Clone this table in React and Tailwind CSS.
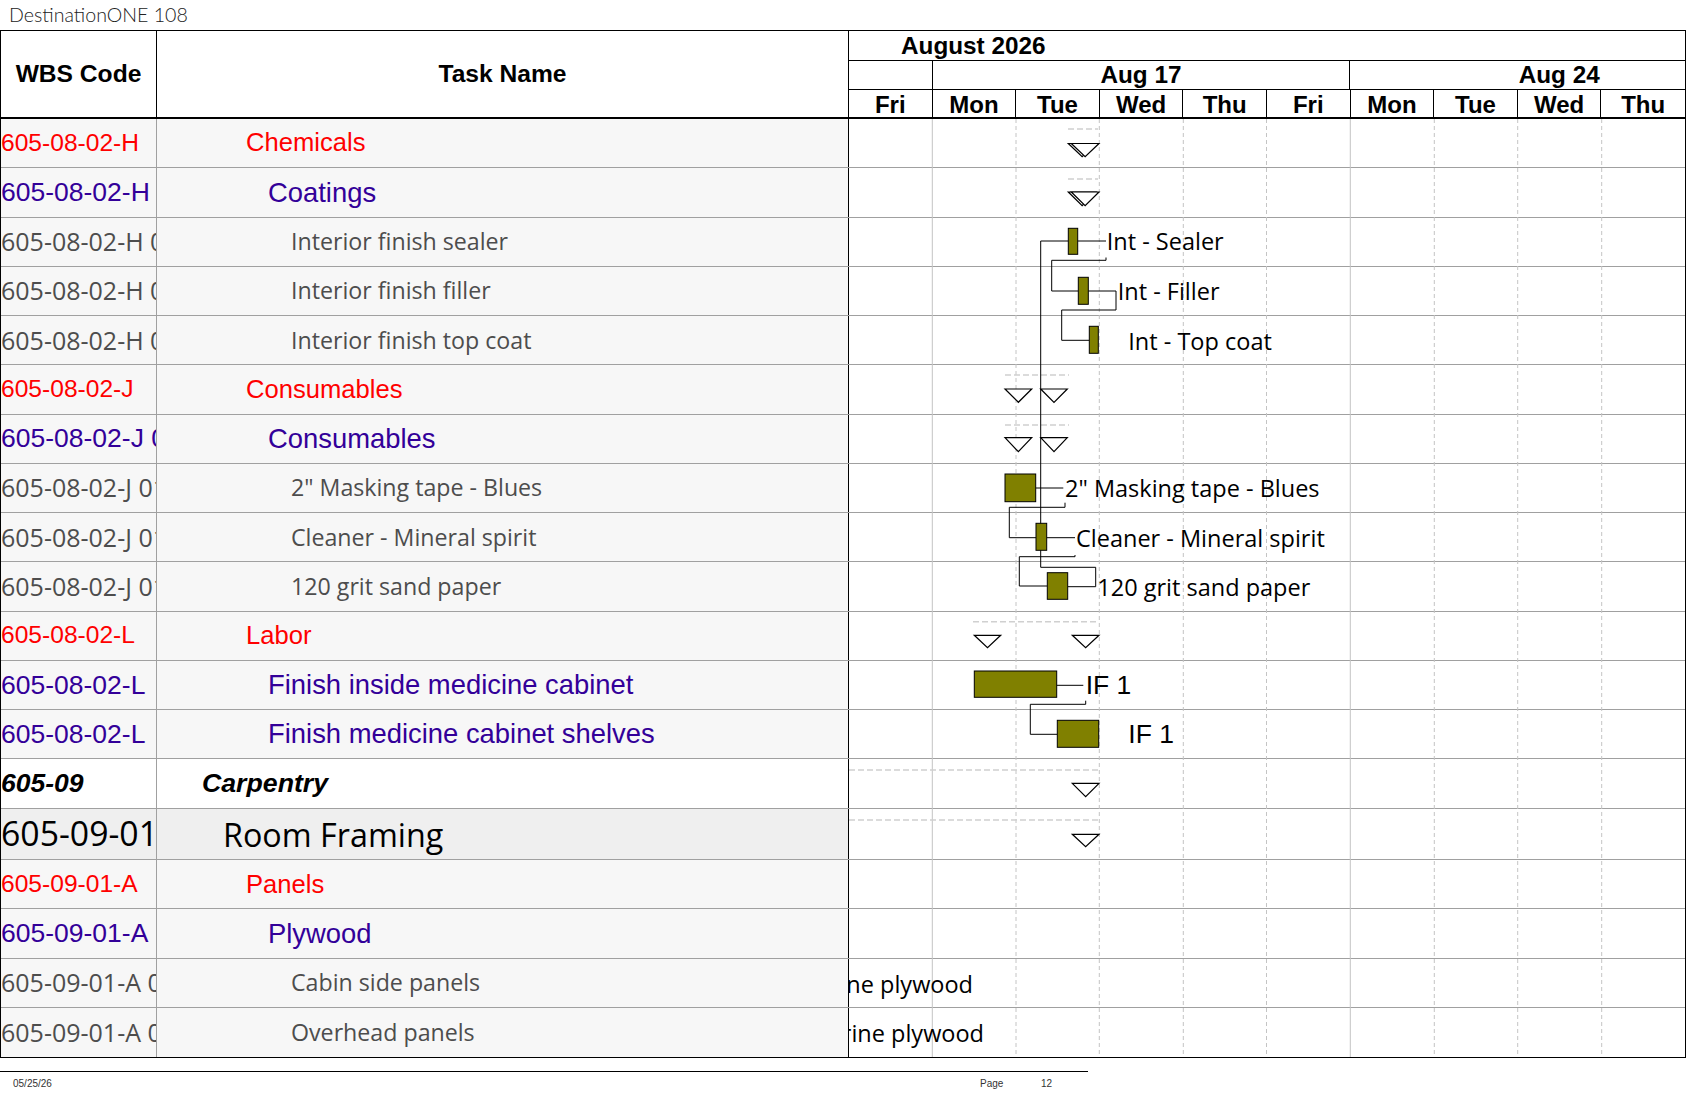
const ARIAL = "font-['Liberation_Sans',Arial,sans-serif]";
const OPEN = "font-['Open_Sans','Noto_Sans',sans-serif]";

const rows = [
  { code: '605-08-02-H', name: 'Chemicals', t: 'red' },
  { code: '605-08-02-H', name: 'Coatings', t: 'purple' },
  { code: '605-08-02-H 01', name: 'Interior finish sealer', t: 'gray' },
  { code: '605-08-02-H 02', name: 'Interior finish filler', t: 'gray' },
  { code: '605-08-02-H 03', name: 'Interior finish top coat', t: 'gray' },
  { code: '605-08-02-J', name: 'Consumables', t: 'red' },
  { code: '605-08-02-J 01', name: 'Consumables', t: 'purple' },
  { code: '605-08-02-J 01 01', name: '2" Masking tape - Blues', t: 'gray' },
  { code: '605-08-02-J 01 02', name: 'Cleaner - Mineral spirit', t: 'gray' },
  { code: '605-08-02-J 01 03', name: '120 grit sand paper', t: 'gray' },
  { code: '605-08-02-L', name: 'Labor', t: 'red' },
  { code: '605-08-02-L', name: 'Finish inside medicine cabinet', t: 'purple' },
  { code: '605-08-02-L', name: 'Finish medicine cabinet shelves', t: 'purple' },
  { code: '605-09', name: 'Carpentry', t: 'carp' },
  { code: '605-09-01', name: 'Room Framing', t: 'room' },
  { code: '605-09-01-A', name: 'Panels', t: 'red' },
  { code: '605-09-01-A', name: 'Plywood', t: 'purple' },
  { code: '605-09-01-A 01', name: 'Cabin side panels', t: 'gray' },
  { code: '605-09-01-A 02', name: 'Overhead panels', t: 'gray' },
];

const styles = {
  red: {
    h: 'h-[49.25px]', bg: 'bg-[#f7f7f7]',
    code: `${ARIAL} text-[24.6px] leading-none text-[#ff0000]`,
    name: `${ARIAL} text-[25.6px] leading-none text-[#ff0000] pl-[89px]`,
  },
  purple: {
    h: 'h-[49.25px]', bg: 'bg-[#f7f7f7]',
    code: `${ARIAL} text-[26.5px] leading-none text-[#330099]`,
    name: `${ARIAL} text-[27.4px] leading-none text-[#330099] pl-[111px]`,
  },
  gray: {
    h: 'h-[49.25px]', bg: 'bg-[#f7f7f7]',
    code: `${OPEN} text-[25px] leading-none text-[#4d4d4d]`,
    name: `${OPEN} text-[23.2px] leading-none text-[#4d4d4d] pl-[134px]`,
  },
  carp: {
    h: 'h-[49.25px]', bg: 'bg-white',
    code: `${ARIAL} text-[26.5px] leading-none font-bold italic text-black`,
    name: `${ARIAL} text-[26.7px] leading-none font-bold italic text-black pl-[45px]`,
  },
  room: {
    h: 'h-[51.7px]', bg: 'bg-[#efefef]',
    code: `${OPEN} text-[33.8px] leading-none text-black`,
    name: `${OPEN} text-[32.3px] leading-none text-black pl-[66px]`,
  },
};

const days = ['Fri', 'Mon', 'Tue', 'Wed', 'Thu', 'Fri', 'Mon', 'Tue', 'Wed', 'Thu'];

const solidLines = [932.3, 1350.3];
const dashedLines = [1016, 1099.3, 1183.3, 1266.5, 1434.3, 1517.7, 1601.7];

const bars = [
  [1068.3, 228.3, 9.4, 26],
  [1078.3, 277.3, 10, 27],
  [1089.3, 326.3, 9, 27],
  [1005, 474, 30.7, 27.7],
  [1036, 523.3, 10.7, 27],
  [1047.3, 572.7, 20.4, 26.6],
  [974.3, 671, 82.4, 26.3],
  [1057.3, 720.3, 41.4, 27],
];

const paths = [
  'M1040.7 241 H1068.3',
  'M1077.7 241 H1106',
  'M1040.7 241 V567.3 H1095.7 V586.7 H1067.7',
  'M1106 257.5 V260.3 H1051.7 V291 H1078.3',
  'M1088.3 291 H1116 V310 H1061.7 V340.3 H1089.3',
  'M1035.7 488 H1063.3',
  'M1065 502.7 V507.3 H1009.3 V537.7 H1036',
  'M1046.7 537.7 H1075',
  'M1075 555 V556.7 H1019.3 V586 H1047.3',
  'M1056.7 685.3 H1083.3',
  'M1085.7 700.7 V704.3 H1030.3 V734.3 H1057.3',
];

const dashes = [
  [1068, 1098, 129],
  [1068, 1098, 179],
  [1005, 1069, 375],
  [1005, 1069, 425],
  [973, 1099, 621.7],
  [849, 1099, 770],
  [849, 1099, 820],
];

function tri(x1, x2, y1, y2) {
  const mid = (x1 + x2) / 2;
  return `${x1},${y1} ${x2},${y1} ${mid},${y2}`;
}

const triangles = [
  [1068.3, 1096, 143.5, 156.7],
  [1071.3, 1099, 143.5, 156.7],
  [1068.3, 1096, 192, 205.7],
  [1071.3, 1099, 192, 205.7],
  [1005, 1031.7, 389, 402.3],
  [1040.7, 1067.3, 389, 402.3],
  [1005, 1031.7, 437.7, 451.7],
  [1040.7, 1067.3, 437.7, 451.7],
  [974.3, 1000.7, 635.3, 647.7],
  [1072.3, 1099, 635.3, 647.7],
  [1072.3, 1099, 783.3, 796.7],
  [1072.3, 1099, 834.3, 846.7],
];

const labels = [
  [1106.7, 241, 'Int - Sealer'],
  [1117.7, 291, 'Int - Filler'],
  [1128.3, 340.5, 'Int - Top coat'],
  [1065, 488, '2" Masking tape - Blues'],
  [1076, 537.7, 'Cleaner - Mineral spirit'],
  [1097.3, 587, '120 grit sand paper'],
];

function Chart() {
  return (
    <svg
      className="absolute left-[848px] top-0 h-full w-[836px] overflow-hidden"
      xmlns="http://www.w3.org/2000/svg"
    >
      <g transform="translate(-849 -119)">
        {solidLines.map((x) => (
          <line key={x} x1={x} x2={x} y1={119} y2={1060} stroke="#c4c4c4" strokeWidth="1" />
        ))}
        {dashedLines.map((x) => (
          <line key={x} x1={x} x2={x} y1={119} y2={1060} stroke="#c4c4c4" strokeWidth="1" strokeDasharray="4 3" />
        ))}
        {dashes.map(([a, b, y], i) => (
          <line key={i} x1={a} x2={b} y1={y} y2={y} stroke="#d0d0d0" strokeWidth="1.6" strokeDasharray="6 3" />
        ))}
        {triangles.map(([a, b, y1, y2], i) => (
          <polygon key={i} points={tri(a, b, y1, y2)} fill="white" stroke="black" strokeWidth="1.2" />
        ))}
        {paths.map((d, i) => (
          <path key={i} d={d} fill="none" stroke="black" strokeWidth="1" />
        ))}
        {bars.map(([x, y, w, h], i) => (
          <rect key={i} x={x} y={y} width={w} height={h} fill="#808000" stroke="black" strokeWidth="1" />
        ))}
        {labels.map(([x, y, t], i) => (
          <text key={i} x={x} y={y} dominantBaseline="central" fontFamily="'Open Sans', 'Noto Sans', sans-serif" fontSize="23.5" fill="black">
            {t}
          </text>
        ))}
        <text x={1085.7} y={685.3} dominantBaseline="central" fontFamily="'Liberation Sans', Arial, sans-serif" fontSize="26.5" fill="black">IF 1</text>
        <text x={1128.3} y={734.3} dominantBaseline="central" fontFamily="'Liberation Sans', Arial, sans-serif" fontSize="26.5" fill="black">IF 1</text>
        <text x={973} y={983.5} textAnchor="end" dominantBaseline="central" fontFamily="'Open Sans', 'Noto Sans', sans-serif" fontSize="23.5" fill="black">Marine plywood</text>
        <text x={984} y={1033} textAnchor="end" dominantBaseline="central" fontFamily="'Open Sans', 'Noto Sans', sans-serif" fontSize="23.5" fill="black">Marine plywood</text>
      </g>
    </svg>
  );
}

export default function App() {
  return (
    <div className={`w-[1687px] h-[1097px] bg-white text-black ${ARIAL}`}>
      <div className="h-[30px] pl-[9px] flex items-center font-['Lato','Open_Sans',sans-serif] font-light text-[19.6px] leading-none text-[#222]">
        DestinationONE 108
      </div>
      <div className="w-[1686px] border border-black">
        <div className="flex h-[88px] border-b-2 border-black">
          <div className="w-[156px] shrink-0 border-r border-black flex items-center justify-center font-bold text-[24.6px] leading-none">
            WBS Code
          </div>
          <div className="w-[692px] shrink-0 border-r border-black flex items-center justify-center font-bold text-[24.6px] leading-none">
            Task Name
          </div>
          <div className="flex-1 min-w-0 flex flex-col overflow-hidden">
            <div className="h-[30px] shrink-0 border-b border-black flex items-center pl-[52px] pt-[1px] font-bold text-[24.3px] leading-none">
              August 2026
            </div>
            <div className="h-[29px] shrink-0 border-b border-black flex">
              <div className="w-[83.55px] shrink-0 border-r border-black" />
              <div className="w-[417.75px] shrink-0 border-r border-black flex items-center justify-center font-bold text-[24.3px] leading-none">
                Aug 17
              </div>
              <div className="w-[417.75px] shrink-0 flex items-center justify-center font-bold text-[24.3px] leading-none">
                Aug 24
              </div>
            </div>
            <div className="flex-1 grid grid-cols-10">
              {days.map((d, i) => (
                <div
                  key={i}
                  className={`flex items-center justify-center pt-[3px] font-bold text-[24px] leading-[24px] ${i < 9 ? 'border-r border-black' : ''}`}
                >
                  {d}
                </div>
              ))}
            </div>
          </div>
        </div>
        <div className="relative">
          {rows.map((r, i) => {
            const s = styles[r.t];
            return (
              <div
                key={i}
                className={`flex ${s.h} ${i < rows.length - 1 ? 'border-b border-[#a0a0a0]' : ''}`}
              >
                <div className={`w-[156px] shrink-0 border-r border-[#a0a0a0] ${s.bg} flex items-center overflow-hidden whitespace-nowrap`}>
                  <span className={s.code}>{r.code}</span>
                </div>
                <div className={`w-[692px] shrink-0 border-r border-black ${s.bg} flex items-center overflow-hidden whitespace-nowrap ${s.name}`}>
                  {r.name}
                </div>
                <div className="flex-1 bg-white" />
              </div>
            );
          })}
          <Chart />
        </div>
      </div>
      <div className="mt-[13px] w-[1088px] h-[25px] border-t border-black flex items-center text-[10px] leading-none text-[#333]">
        <span className="ml-[13px] w-[967px] shrink-0">05/25/26</span>
        <span className="w-[61px] shrink-0">Page</span>
        <span>12</span>
      </div>
    </div>
  );
}
